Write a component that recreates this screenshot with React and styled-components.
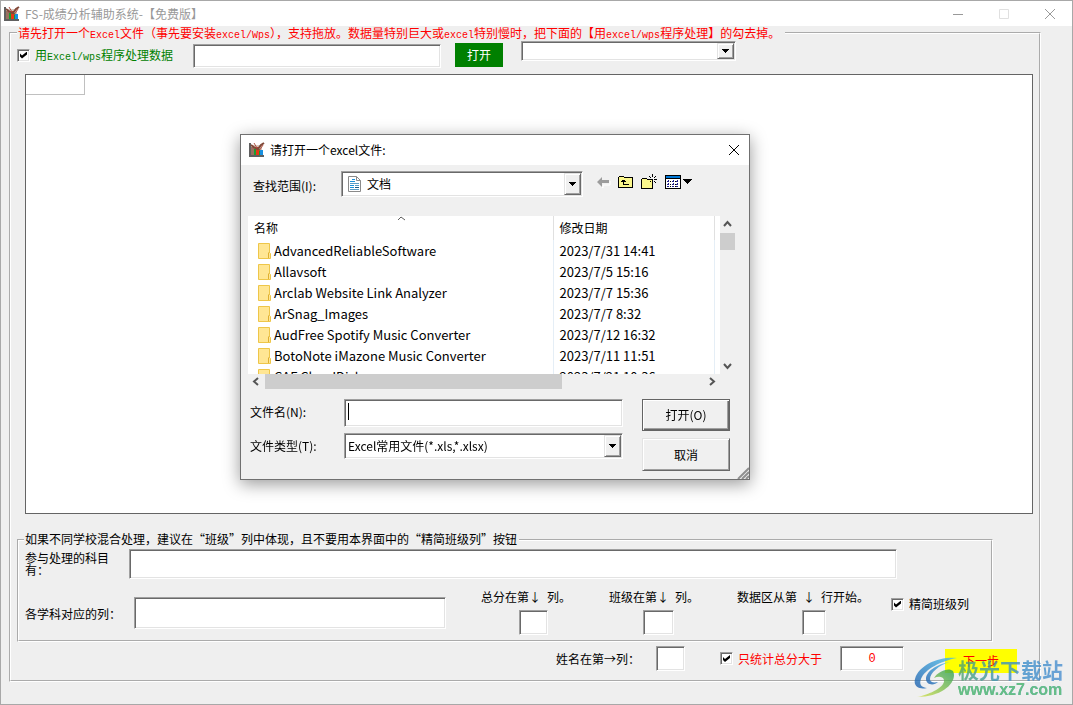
import { useState } from 'react';
import styled, { createGlobalStyle, css } from 'styled-components';

const GlobalStyle = createGlobalStyle`
  * {
    box-sizing: border-box;
  }
  body {
    margin: 0;
    background: #efefef;
    color: #000000;
    font-family: 'Noto Sans CJK SC', sans-serif;
    font-size: 12px;
    line-height: 14px;
  }
  button, input, select {
    font: inherit;
    color: inherit;
    margin: 0;
    padding: 0;
    border: 0;
    outline: 0;
    border-radius: 0;
  }
`;

const sunken = css`
  background: #ffffff;
  border: 1px solid;
  border-color: #a0a0a0 #ffffff #ffffff #a0a0a0;
  box-shadow: inset 1px 1px #696969, inset -1px -1px #e3e3e3;
`;
const raised = css`
  background: #f0f0f0;
  border: 1px solid;
  border-color: #e3e3e3 #696969 #696969 #e3e3e3;
  box-shadow: inset 1px 1px #ffffff, inset -1px -1px #a0a0a0;
`;

const Window = styled.div`
  position: relative;
  display: flex;
  flex-direction: column;
  min-height: 100vh;
  border: 1px solid #a8a8a8;
`;
const TitleBar = styled.header`
  display: flex;
  align-items: center;
  gap: 5px;
  height: 25px;
  padding-left: 3px;
  background: #ffffff;
  color: #999999;
`;
const Title = styled.h1`
  flex: 1;
  margin: 0;
  font-size: 12px;
  font-weight: normal;
`;
const CaptionButton = styled.button`
  display: grid;
  place-items: center;
  width: 45px;
  height: 24px;
  background: none;
  margin-left: -5px;
  & + & {
    margin-left: -4px;
  }
`;
const Group = styled.fieldset`
  display: flex;
  flex-direction: column;
  min-width: 0;
  margin: 0;
  padding: 0;
  border: 2px groove #ffffff;
`;
const MainGroup = styled(Group)`
  flex: 1;
  margin: 0 31px 22px 8px;
  padding: 0 6px 7px;
`;
const Legend = styled.legend`
  height: 14px;
  margin: 0;
  padding: 0 5px 0 1px;
  color: ${(p) => p.$color || 'inherit'};
  white-space: nowrap;
`;
const Mono = styled.span`
  font-family: 'Liberation Mono', monospace;
  font-size: 10px;
  line-height: 10px;
  white-space: pre;
`;
const Toolbar = styled.div`
  display: flex;
  align-items: center;
  height: 34px;
  padding-bottom: 4px;
`;
const CheckLabel = styled.label`
  display: flex;
  align-items: center;
  gap: 5px;
  color: ${(p) => p.$color || 'inherit'};
  white-space: nowrap;
`;
const Check = styled.input`
  ${sunken}
  appearance: none;
  display: grid;
  place-items: center;
  flex: none;
  width: 13px;
  height: 13px;
  &:checked::after {
    content: '';
    width: 7px;
    height: 7px;
    background: #000000;
    clip-path: polygon(0 2px, 2px 4px, 7px 0, 7px 3px, 2px 7px, 0 5px);
  }
`;
const TextBox = styled.input`
  ${sunken}
  flex: none;
  width: ${(p) => p.$width};
  height: ${(p) => p.$height || '25px'};
  padding: 0 4px;
`;
const PathBox = styled(TextBox)`
  margin: 2px 14px 0 20px;
`;
const OpenButton = styled.button`
  width: 48px;
  height: 24px;
  margin-right: 18px;
  background: #008000;
  color: #ffffff;
`;
const Combo = styled.div`
  ${sunken}
  display: flex;
  align-items: center;
  width: ${(p) => p.$width};
  height: ${(p) => p.$height || '26px'};
  padding: 1px;
  select {
    flex: 1;
    min-width: 0;
    height: 100%;
    padding-left: ${(p) => p.$indent || '2px'};
    appearance: none;
    background: none;
  }
  > svg:first-child {
    margin-left: 5px;
  }
`;
const SheetCombo = styled(Combo)`
  align-self: flex-start;
  margin-top: 1px;
`;
const ComboArrow = styled.span`
  ${raised}
  display: grid;
  place-items: center;
  width: 17px;
  height: 100%;
  pointer-events: none;
`;
const Sheet = styled.div`
  flex: 1;
  min-height: calc(100vh - 265px);
  margin-left: 8px;
  background: #ffffff;
  border: 1px solid #646464;
`;
const Cell = styled.div`
  width: 59px;
  height: 20px;
  border: solid #c0c0c0;
  border-width: 0 1px 1px 0;
`;
const ColumnGroup = styled(Group)`
  margin: 18px 40px 0 0;
  padding: 0 6px;
`;
const ColumnLegend = styled(Legend)`
  height: 16px;
  margin-left: -1px;
  padding-right: 2px;
`;
const SubjectRow = styled.div`
  display: flex;
  align-items: center;
  height: 32px;
  padding-right: 88px;
`;
const SubjectLabel = styled.label`
  width: 104px;
  padding-right: 14px;
  line-height: 12px;
`;
const SubjectBox = styled(TextBox)`
  flex: 1;
  min-width: 0;
`;
const FieldRow = styled.div`
  display: flex;
  align-items: flex-start;
  height: 60px;
  padding-top: 10px;
  white-space: nowrap;
`;
const FieldLabel = styled.label`
  width: 109px;
  padding-top: 17px;
`;
const ListBox = styled(TextBox)`
  margin: 7px 35px 0 0;
`;
const Column = styled.div`
  display: flex;
  flex-direction: column;
  gap: 5px;
  width: ${(p) => p.$width || '128px'};
  input {
    margin-left: ${(p) => p.$indent};
  }
`;
const SlimLabel = styled(CheckLabel)`
  margin-top: 7px;
`;
const Footer = styled.div`
  display: flex;
  align-items: center;
  justify-content: flex-end;
  height: 31px;
  padding: 2px 16px 0 0;
  white-space: nowrap;
`;
const NameLabel = styled.label`
  margin-right: 16px;
`;
const TotalLabel = styled(CheckLabel)`
  margin: 0 18px 0 35px;
`;
const ScoreBox = styled(TextBox)`
  margin-right: 41px;
  color: #ff0000;
  font-family: 'Liberation Mono', monospace;
  text-align: center;
`;
const NextButton = styled.button`
  width: 72px;
  height: 24px;
  margin-top: 4px;
  background: #ffff00;
  color: #ff0000;
`;

const Dialog = styled.section`
  position: absolute;
  top: 133px;
  left: 239px;
  width: 510px;
  background: #f0f0f0;
  border: 1px solid #707070;
  box-shadow: 0 4px 16px rgba(0, 0, 0, 0.4);
`;
const DialogBar = styled.header`
  display: flex;
  align-items: center;
  gap: 5px;
  height: 30px;
  padding-left: 8px;
  background: #ffffff;
  h2 {
    flex: 1;
    margin: 0;
    font-size: 12px;
    font-weight: normal;
  }
`;
const CloseButton = styled.button`
  display: grid;
  place-items: center;
  width: 30px;
  height: 28px;
  background: none;
`;
const LookIn = styled.div`
  display: flex;
  align-items: center;
  height: 38px;
  padding-left: 12px;
  label {
    width: 88px;
    padding-top: 4px;
  }
`;
const Tools = styled.div`
  display: flex;
  align-items: center;
  gap: 7px;
  margin-left: 13px;
  padding-bottom: 4px;
  button {
    display: flex;
    background: none;
  }
`;
const Browser = styled.div`
  display: grid;
  grid-template-columns: 1fr 15px;
  grid-template-rows: 158px 15px;
  margin: 13px 14px 0 7px;
`;
const FileList = styled.div`
  overflow: hidden;
  background: #ffffff;
`;
const FileTable = styled.table`
  width: 467px;
  border-collapse: collapse;
  table-layout: fixed;
  th, td {
    height: 21px;
    padding: 0 0 0 6px;
    border-right: 1px solid #e5eef6;
    font-weight: normal;
    text-align: left;
    white-space: nowrap;
  }
  th {
    position: relative;
    height: 24px;
    border-color: #e0e0e0;
  }
  th:first-child {
    width: 305px;
  }
  td {
    font-size: 13px;
  }
  td:first-child {
    padding-left: 10px;
  }
`;
const SortMark = styled.svg`
  position: absolute;
  top: 0;
  left: 149px;
`;
const FileName = styled.span`
  display: flex;
  align-items: center;
  gap: 3px;
`;
const ScrollBar = styled.div`
  display: flex;
  flex-direction: ${(p) => (p.$vertical ? 'column' : 'row')};
  button {
    display: grid;
    place-items: center;
    flex: none;
    width: ${(p) => (p.$vertical ? '15px' : '17px')};
    height: ${(p) => (p.$vertical ? '17px' : '15px')};
    background: none;
  }
  button:last-child {
    margin: ${(p) => (p.$vertical ? 'auto 0 0' : '0 0 0 auto')};
  }
`;
const Thumb = styled.div`
  flex: none;
  width: ${(p) => p.$width};
  height: ${(p) => p.$height};
  background: #cdcdcd;
`;
const DialogForm = styled.form`
  display: grid;
  grid-template-columns: 94px 1fr 88px;
  grid-template-rows: 32px 33px;
  row-gap: 7px;
  padding: 10px 19px 8px 9px;
  > label {
    padding-top: 6px;
  }
  > :nth-child(3n + 2) {
    margin-right: 19px;
  }
`;
const NameBox = styled.input`
  ${sunken}
  min-width: 0;
  height: 28px;
  padding: 0 4px;
  &:placeholder-shown {
    background: linear-gradient(#000000, #000000) 3px 3px / 1px 17px no-repeat #ffffff;
    caret-color: transparent;
  }
`;
const TypeCombo = styled(Combo)`
  margin-top: -5px;
`;
const TypeLabel = styled.label`
  margin-top: -5px;
`;
const DialogButton = styled.button`
  ${raised}
  ${(p) =>
    p.$primary &&
    css`
      border-color: #646464;
      box-shadow: inset 1px 1px #ffffff, inset -1px -1px #696969, inset -2px -2px #a0a0a0;
    `}
`;
const Grip = styled.svg`
  position: absolute;
  right: 0;
  bottom: 0;
`;
const Watermark = styled.div`
  position: absolute;
  right: 9px;
  bottom: 5px;
  display: flex;
  align-items: center;
  gap: 1px;
  pointer-events: none;
  opacity: 0.8;
`;
const Brand = styled.div`
  display: flex;
  flex-direction: column;
  font-size: 21px;
  font-weight: bold;
  line-height: 24px;
  background: linear-gradient(90deg, #4ea56c, #3a8fc8 50%, #4a8fd0);
  background-clip: text;
  color: transparent;
  small {
    font-family: 'Liberation Sans', sans-serif;
    font-size: 16px;
    line-height: 18px;
    color: #45b36b;
  }
`;

const files = [
  ['AdvancedReliableSoftware', '2023/7/31 14:41'],
  ['Allavsoft', '2023/7/5 15:16'],
  ['Arclab Website Link Analyzer', '2023/7/7 15:36'],
  ['ArSnag_Images', '2023/7/7 8:32'],
  ['AudFree Spotify Music Converter', '2023/7/12 16:32'],
  ['BotoNote iMazone Music Converter', '2023/7/11 11:51'],
  ['CAF CloudDisk', '2023/7/21 10:36'],
];

function AppIcon() {
  return (
    <svg width="16" height="16" viewBox="0 0 16 16">
      <path d="M3 3h10v10H3z" fill="#d8c8c0" />
      <path d="M0 1h2v12h13v2H0z" fill="#606060" />
      <path d="M2 5h3v8H2z" fill="#9a7060" />
      <path d="M5 7h2v6H5z" fill="#18a030" />
      <path d="M7 5h3v8H7z" fill="#e83818" />
      <path d="M10 7h1v6h-1z" fill="#18a030" />
      <path d="M11 8h3v5h-3z" fill="#1890e0" />
      <path d="M2 3l4 3 3 1 3-4 3-2" fill="none" stroke="#804838" strokeWidth="2" />
      <path d="M5 1l3 5M10 9l4-6" stroke="#b05040" />
    </svg>
  );
}

function Arrow() {
  return (
    <ComboArrow>
      <svg width="7" height="4" viewBox="0 0 7 4" shapeRendering="crispEdges">
        <path d="M0 0h7v1H6v1H5v1H4v1H3V3H2V2H1V1H0z" />
      </svg>
    </ComboArrow>
  );
}

function FolderIcon() {
  return (
    <svg width="13" height="16" viewBox="0 0 13 16">
      <path d="M.5.5h11v9l1 1v5H.5z" fill="#ffe694" stroke="#eec649" />
      <path d="M10.5 15v-5l1-1" fill="none" stroke="#e0b030" />
    </svg>
  );
}

function DocumentIcon() {
  return (
    <svg width="13" height="16" viewBox="0 0 13 16">
      <path d="M.5.5h8l4 4v11H.5z" fill="#fff" stroke="#8a8a8a" />
      <path d="M8.5.5v4h4" fill="none" stroke="#8a8a8a" />
      <path d="M4 3.5h3M2 5.5h5M2 9.5h4M2 11.5h4" stroke="#1c90d8" />
      <path d="M2 7.5h9M7 9.5h4M2 13.5h9" stroke="#5a9cc4" />
      <path d="M7 11h4v1H7z" fill="#1c5a84" />
    </svg>
  );
}

function Chevron({ d }) {
  return (
    <svg width="9" height="9" viewBox="0 0 9 9">
      <path d={d} fill="none" stroke="#555555" strokeWidth="2" />
    </svg>
  );
}

function CrossIcon() {
  return (
    <svg width="12" height="12" viewBox="0 0 12 12">
      <path d="M1 1l10 10M11 1L1 11" stroke="currentColor" />
    </svg>
  );
}

function DialogTools() {
  return (
    <Tools>
      <button type="button" aria-label="后退">
        <svg width="15" height="12" viewBox="0 0 15 12">
          <path d="M2 7l5 5V9h7V5" fill="none" stroke="#fff" />
          <path d="M1 6l5-5v3h7v3H6v4z" fill="#9c9c9c" />
        </svg>
      </button>
      <button type="button" aria-label="向上一级">
        <svg width="16" height="14" viewBox="0 0 16 14" shapeRendering="crispEdges">
          <path d="M.5 12.5v-10l1-1h4l1 1h8v10z" fill="#fbf78c" stroke="#000" />
          <path d="M5.5 5v4.5H11M3 6.5h5M4 5.5h3" fill="none" stroke="#000" />
        </svg>
      </button>
      <button type="button" aria-label="新建文件夹">
        <svg width="17" height="16" viewBox="0 0 17 16" shapeRendering="crispEdges">
          <path d="M.5 14.5v-9l1-1h4l1 1h5v9z" fill="#fbf78c" stroke="#000" />
          <path
            d="M11 0h1v3h-1zM11 7h1v3h-1zM7 5h3v1H7zM13 5h3v1h-3zM8 2h1v1H8zM9 3h1v1H9zM14 2h1v1h-1zM13 3h1v1h-1zM13 7h1v1h-1zM14 8h1v1h-1zM9 7h1v1H9z"
            fill="#000"
          />
        </svg>
      </button>
      <button type="button" aria-label="查看">
        <svg width="28" height="14" viewBox="0 0 28 14" shapeRendering="crispEdges">
          <path d="M.5.5h15v13H.5z" fill="#fff" stroke="#000" />
          <path d="M1 1h14v2H1z" fill="#0078d7" />
          <path d="M1 3h14v1H1z" fill="#000" />
          <path d="M3 5h1v2H2V6h1zM8 5h1v2H7V6h1zM12 5h1v2h-2V6h1zM3 8h1v2H2V9h1zM8 8h1v2H7V9h1zM12 8h1v2h-2V9h1zM2 11h2v1H2zM7 11h2v1H7zM11 11h2v1h-2z" fill="#20208c" />
          <path d="M5 6h1v1H5zM10 6h1v1h-1zM5 9h1v1H5zM10 9h1v1h-1zM5 11h1v1H5zM10 11h1v1h-1z" fill="#000" />
          <path d="M18 4h9v1h-1v1h-1v1h-1v1h-1v1h-1V8h-1V7h-1V6h-1V5h-1z" fill="#000" />
        </svg>
      </button>
    </Tools>
  );
}

function OpenDialog({ onClose }) {
  return (
    <Dialog role="dialog" aria-labelledby="dialog-title">
      <DialogBar>
        <AppIcon />
        <h2 id="dialog-title">请打开一个excel文件:</h2>
        <CloseButton type="button" aria-label="关闭" onClick={onClose}>
          <CrossIcon />
        </CloseButton>
      </DialogBar>
      <LookIn>
        <label htmlFor="look-in">查找范围(I):</label>
        <Combo $width="242px" $indent="6px">
          <DocumentIcon />
          <select id="look-in">
            <option>文档</option>
          </select>
          <Arrow />
        </Combo>
        <DialogTools />
      </LookIn>
      <Browser>
        <FileList>
          <FileTable>
            <thead>
              <tr>
                <th>
                  名称
                  <SortMark width="9" height="5" viewBox="0 0 9 5">
                    <path d="M1 4l3-3 4 3" fill="none" stroke="#606060" />
                  </SortMark>
                </th>
                <th>修改日期</th>
              </tr>
            </thead>
            <tbody>
              {files.map(([name, date]) => (
                <tr key={name}>
                  <td>
                    <FileName>
                      <FolderIcon />
                      {name}
                    </FileName>
                  </td>
                  <td>{date}</td>
                </tr>
              ))}
            </tbody>
          </FileTable>
        </FileList>
        <ScrollBar $vertical>
          <button type="button" aria-label="向上滚动">
            <Chevron d="M1 6l3.500-4L8 6" />
          </button>
          <Thumb $width="15px" $height="17px" />
          <button type="button" aria-label="向下滚动">
            <Chevron d="M1 3l3.500 4L8 3" />
          </button>
        </ScrollBar>
        <ScrollBar>
          <button type="button" aria-label="向左滚动">
            <Chevron d="M6 1L2 4.500L6 8" />
          </button>
          <Thumb $width="297px" $height="15px" />
          <button type="button" aria-label="向右滚动">
            <Chevron d="M3 1l4 3.500L3 8" />
          </button>
        </ScrollBar>
      </Browser>
      <DialogForm onSubmit={(e) => e.preventDefault()}>
        <label htmlFor="file-name">文件名(N):</label>
        <NameBox id="file-name" placeholder=" " autoFocus />
        <DialogButton $primary>打开(O)</DialogButton>
        <TypeLabel htmlFor="file-type">文件类型(T):</TypeLabel>
        <TypeCombo>
          <select id="file-type">
            <option>Excel常用文件(*.xls,*.xlsx)</option>
          </select>
          <Arrow />
        </TypeCombo>
        <DialogButton type="button" onClick={onClose}>
          取消
        </DialogButton>
      </DialogForm>
      <Grip width="12" height="12" viewBox="0 0 12 12">
        <path d="M1 12L12 1M5 12l7-7M9 12l3-3" stroke="#909090" strokeWidth="2" />
      </Grip>
    </Dialog>
  );
}

function App() {
  const [dialogOpen, setDialogOpen] = useState(true);

  return (
    <>
      <GlobalStyle />
      <Window lang="zh-CN">
        <TitleBar>
          <AppIcon />
          <Title>FS-成绩分析辅助系统-【免费版】</Title>
          <CaptionButton aria-label="最小化">
            <svg width="10" height="10" viewBox="0 0 10 10">
              <path d="M0 5.500h10" stroke="#999999" />
            </svg>
          </CaptionButton>
          <CaptionButton aria-label="最大化" disabled>
            <svg width="10" height="10" viewBox="0 0 10 10">
              <path d="M.5.5h9v9h-9z" fill="none" stroke="#e0e0e0" />
            </svg>
          </CaptionButton>
          <CaptionButton aria-label="关闭">
            <CrossIcon />
          </CaptionButton>
        </TitleBar>

        <MainGroup>
          <Legend $color="#ff0000">
            请先打开一个<Mono>Excel</Mono>文件（事先要安装<Mono>excel/Wps</Mono>
            ），支持拖放。数据量特别巨大或<Mono>excel</Mono>特别慢时，把下面的【用
            <Mono>excel/wps</Mono>程序处理】的勾去掉。
          </Legend>
          <Toolbar>
            <CheckLabel $color="#008000">
              <Check type="checkbox" defaultChecked />
              <span>
                用<Mono>Excel/wps</Mono>程序处理数据
              </span>
            </CheckLabel>
            <PathBox $width="248px" $height="24px" aria-label="文件路径" />
            <OpenButton onClick={() => setDialogOpen(true)}>打开</OpenButton>
            <SheetCombo $width="215px" $height="20px">
              <select aria-label="工作表" />
              <Arrow />
            </SheetCombo>
          </Toolbar>
          <Sheet>
            <Cell />
          </Sheet>

          <ColumnGroup>
            <ColumnLegend>
              如果不同学校混合处理，建议在“班级”列中体现，且不要用本界面中的“精简班级列”按钮
            </ColumnLegend>
            <SubjectRow>
              <SubjectLabel htmlFor="subjects">参与处理的科目有：</SubjectLabel>
              <SubjectBox id="subjects" $height="30px" />
            </SubjectRow>
            <FieldRow>
              <FieldLabel htmlFor="columns">各学科对应的列：</FieldLabel>
              <ListBox id="columns" $width="312px" $height="32px" />
              <Column $indent="38px">
                <label htmlFor="total-col">
                  总分在第↓<Mono> </Mono>列。
                </label>
                <TextBox id="total-col" $width="29px" />
              </Column>
              <Column $indent="34px">
                <label htmlFor="class-col">
                  班级在第↓<Mono> </Mono>列。
                </label>
                <TextBox id="class-col" $width="31px" />
              </Column>
              <Column $indent="65px" $width="154px">
                <label htmlFor="data-row">
                  数据区从第<Mono> </Mono>↓<Mono> </Mono>行开始。
                </label>
                <TextBox id="data-row" $width="24px" />
              </Column>
              <SlimLabel>
                <Check type="checkbox" defaultChecked />
                精简班级列
              </SlimLabel>
            </FieldRow>
          </ColumnGroup>

          <Footer>
            <NameLabel htmlFor="name-col">姓名在第→列：</NameLabel>
            <TextBox id="name-col" $width="29px" />
            <TotalLabel $color="#ff0000">
              <Check type="checkbox" defaultChecked />
              只统计总分大于
            </TotalLabel>
            <ScoreBox $width="64px" aria-label="总分下限" defaultValue="0" />
            <NextButton>下一步</NextButton>
          </Footer>
        </MainGroup>

        {dialogOpen && <OpenDialog onClose={() => setDialogOpen(false)} />}

        <Watermark>
          <svg width="43" height="42" viewBox="0 0 43 42">
            <defs>
              <linearGradient id="blue" x1="0" y1="1" x2="1" y2="0">
                <stop offset="0" stopColor="#1d5fae" />
                <stop offset="1" stopColor="#4cc0ee" />
              </linearGradient>
              <linearGradient id="green" x1="0" y1="1" x2="1" y2="0">
                <stop offset="0" stopColor="#d8e24a" />
                <stop offset="1" stopColor="#2c9f58" />
              </linearGradient>
            </defs>
            <path d="M43 1C27-1 5 7 1 22c-2 8 5 11 12 9-6-1-8-4-6-9C11 12 27 4 43 1z" fill="url(#blue)" />
            <path d="M36 5C22 7 12 15 12 22c0 6 8 7 12 3-5 1-8 0-8-3 0-6 9-14 20-17z" fill="url(#blue)" />
            <path d="M39 14c5 10-9 26-36 26 10-2 28-9 27-17-1-4-6-4-10-2 4-7 15-11 19-7z" fill="url(#green)" />
          </svg>
          <Brand>
            极光下载站
            <small>www.xz7.com</small>
          </Brand>
        </Watermark>
      </Window>
    </>
  );
}

export default App;
